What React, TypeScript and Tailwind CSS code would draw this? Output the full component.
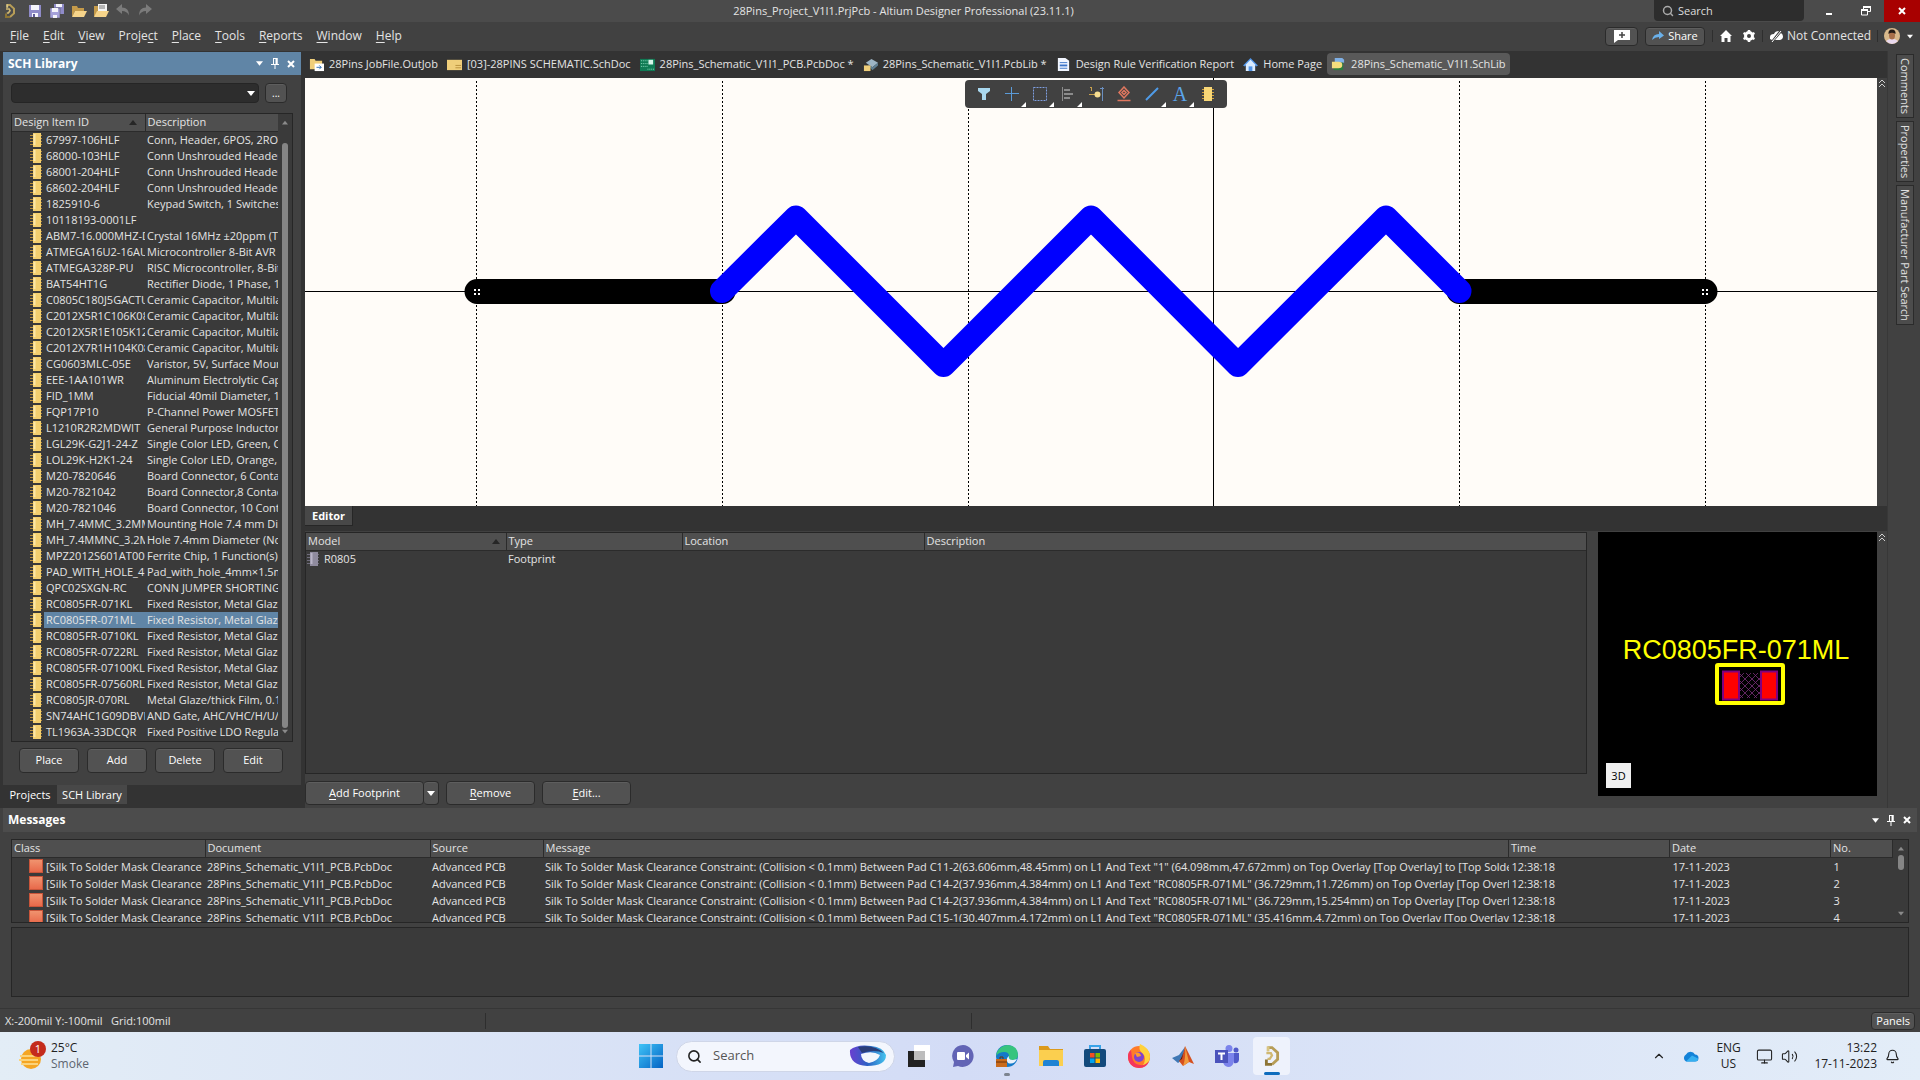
import type { ReactNode } from "react";
import { Bell, ChevronUp, Monitor, Search, Volume2 } from "lucide-react";

const parts: [string, string][] = [
  ["67997-106HLF", "Conn, Header, 6POS, 2ROW"],
  ["68000-103HLF", "Conn Unshrouded Header"],
  ["68001-204HLF", "Conn Unshrouded Header"],
  ["68602-204HLF", "Conn Unshrouded Header"],
  ["1825910-6", "Keypad Switch, 1 Switches"],
  ["10118193-0001LF", ""],
  ["ABM7-16.000MHZ-D2Y", "Crystal 16MHz ±20ppm (Tol)"],
  ["ATMEGA16U2-16AUR", "Microcontroller 8-Bit AVR"],
  ["ATMEGA328P-PU", "RISC Microcontroller, 8-Bit"],
  ["BAT54HT1G", "Rectifier Diode, 1 Phase, 1"],
  ["C0805C180J5GACTU", "Ceramic Capacitor, Multilayer"],
  ["C2012X5R1C106K085", "Ceramic Capacitor, Multilayer"],
  ["C2012X5R1E105K125", "Ceramic Capacitor, Multilayer"],
  ["C2012X7R1H104K085", "Ceramic Capacitor, Multilayer"],
  ["CG0603MLC-05E", "Varistor, 5V, Surface Mount"],
  ["EEE-1AA101WR", "Aluminum Electrolytic Cap"],
  ["FID_1MM", "Fiducial 40mil Diameter, 1"],
  ["FQP17P10", "P-Channel Power MOSFET"],
  ["L1210R2R2MDWIT", "General Purpose Inductor"],
  ["LGL29K-G2J1-24-Z", "Single Color LED, Green, C"],
  ["LOL29K-H2K1-24", "Single Color LED, Orange,"],
  ["M20-7820646", "Board Connector, 6 Contact"],
  ["M20-7821042", "Board Connector,8 Contact"],
  ["M20-7821046", "Board Connector, 10 Contact"],
  ["MH_7.4MMC_3.2MM", "Mounting Hole 7.4 mm Dia"],
  ["MH_7.4MMNC_3.2MM", "Hole 7.4mm Diameter (Non"],
  ["MPZ2012S601AT000", "Ferrite Chip, 1 Function(s)"],
  ["PAD_WITH_HOLE_4MM", "Pad_with_hole_4mm×1.5mm"],
  ["QPC02SXGN-RC", "CONN JUMPER SHORTING"],
  ["RC0805FR-071KL", "Fixed Resistor, Metal Glaze"],
  ["RC0805FR-071ML", "Fixed Resistor, Metal Glaze"],
  ["RC0805FR-0710KL", "Fixed Resistor, Metal Glaze"],
  ["RC0805FR-0722RL", "Fixed Resistor, Metal Glaze"],
  ["RC0805FR-07100KL", "Fixed Resistor, Metal Glaze"],
  ["RC0805FR-07560RL", "Fixed Resistor, Metal Glaze"],
  ["RC0805JR-070RL", "Metal Glaze/thick Film, 0.1"],
  ["SN74AHC1G09DBVR", "AND Gate, AHC/VHC/H/U/"],
  ["TL1963A-33DCQR", "Fixed Positive LDO Regulator"],
];

const messages = [
  'Silk To Solder Mask Clearance Constraint: (Collision < 0.1mm) Between Pad C11-2(63.606mm,48.45mm) on L1 And Text "1" (64.098mm,47.672mm) on Top Overlay [Top Overlay] to [Top Solder]',
  'Silk To Solder Mask Clearance Constraint: (Collision < 0.1mm) Between Pad C14-2(37.936mm,4.384mm) on L1 And Text "RC0805FR-071ML" (36.729mm,11.726mm) on Top Overlay [Top Overlay]',
  'Silk To Solder Mask Clearance Constraint: (Collision < 0.1mm) Between Pad C14-2(37.936mm,4.384mm) on L1 And Text "RC0805FR-071ML" (36.729mm,15.254mm) on Top Overlay [Top Overlay]',
  'Silk To Solder Mask Clearance Constraint: (Collision < 0.1mm) Between Pad C15-1(30.407mm,4.172mm) on L1 And Text "RC0805FR-071ML" (35.416mm,4.72mm) on Top Overlay [Top Overlay] to',
];

// [before, mnemonic, after]
const menus: [string, string, string][] = [
  ["", "F", "ile"],
  ["", "E", "dit"],
  ["", "V", "iew"],
  ["Proje", "c", "t"],
  ["", "P", "lace"],
  ["", "T", "ools"],
  ["", "R", "eports"],
  ["", "W", "indow"],
  ["", "H", "elp"],
];

const cell = "overflow-hidden whitespace-nowrap p-0 text-left font-normal";
const btn =
  "rounded-sm border border-[#2b2b2b] bg-[#525252] text-white shadow-[inset_0_1px_0_#5e5e5e]";

function Chip({ grey = false, className = "" }: { grey?: boolean; className?: string }) {
  const body = grey ? "#8f8b9e" : "#f3cf6e";
  const leg = grey ? "#6f6c7c" : "#b98f3a";
  return (
    <svg viewBox="0 0 14 16" className={"h-4 w-[14px] shrink-0 " + className}>
      <path d="M1 3.500h12M1 6.500h12M1 9.500h12M1 12.500h12" stroke={leg} />
      <rect x="4" y="1" width="8" height="14" fill={body} />
      <path d="M5.500 2v11" stroke={grey ? "#b9b5c8" : "#fbe7a8"} strokeWidth="2" />
    </svg>
  );
}

function Caret({ up = false, className = "" }: { up?: boolean; className?: string }) {
  return (
    <svg viewBox="0 0 8 5" className={"h-[5px] w-2 shrink-0 " + className} fill="currentColor">
      <path d={up ? "M0 5h8L4 0z" : "M0 0h8L4 5z"} />
    </svg>
  );
}

function DoubleChevron() {
  return (
    <svg viewBox="0 0 10 10" className="h-[10px] w-[10px]" fill="none" stroke="#d0d0d0">
      <path d="M2 5l3-3 3 3M2 9l3-3 3 3" />
    </svg>
  );
}

function Pin() {
  return (
    <svg viewBox="0 0 10 11" className="h-[11px] w-[10px]" fill="none" stroke="#fff">
      <path d="M3.500 0v6M7 0v6M3 .5h4M1 6.500h8M5 7v4" />
      <path d="M6.500 0v6" strokeWidth="2" />
    </svg>
  );
}

function Cross() {
  return (
    <svg viewBox="0 0 8 8" className="h-2 w-2" stroke="#fff" strokeWidth="2">
      <path d="M1 1l6 6M7 1L1 7" />
    </svg>
  );
}

function PanelTools() {
  return (
    <div className="flex items-center gap-[7px] text-white">
      <button aria-label="Panel menu"><Caret className="block w-[7px]" /></button>
      <button aria-label="Pin panel"><Pin /></button>
      <button aria-label="Close panel"><Cross /></button>
    </div>
  );
}

function AltiumLogo({ className = "" }: { className?: string }) {
  return (
    <svg viewBox="0 0 16 20" className={className} fill="none" strokeWidth="2.500">
      <path d="M4 2.500h4l5 4.500v6l-5 4.500" stroke="#b79d57" />
      <path d="M3 7.500h4l1 2-2 3H4" stroke="#d0b872" strokeWidth="2" />
      <path d="M3 13v4.500h5" stroke="#8d7535" />
      <path d="M4.500 1.500V6" stroke="#d8c583" />
    </svg>
  );
}

function TitleBar() {
  return (
    <header className="flex h-[22px] items-stretch bg-[#4b4b4b]">
      <div className="flex items-center gap-[6px] pl-[2px]">
        <AltiumLogo className="mr-[3px] h-4 w-4" />
        <button aria-label="Save">
          <svg viewBox="0 0 16 16" className="h-4 w-4">
            <path d="M2 2h12v12H2z" fill="#8f8bc8" />
            <path d="M4 2h8v5H4zM5 10h6v4H5z" fill="#f4f4fb" />
            <path d="M6 11h2v3H6z" fill="#5d5996" />
          </svg>
        </button>
        <button aria-label="Save all">
          <svg viewBox="0 0 16 16" className="h-4 w-4">
            <path d="M5 1h10v10H5z" fill="#8f8bc8" />
            <path d="M7 1h6v3H7z" fill="#f4f4fb" />
            <path d="M1 5h10v10H1z" fill="#a5a1da" stroke="#4b4b4b" strokeWidth=".5" />
            <path d="M3 5h6v4H3zM4 12h4v3H4z" fill="#f4f4fb" />
          </svg>
        </button>
        <button aria-label="Open">
          <svg viewBox="0 0 16 16" className="h-4 w-4">
            <path d="M1 3h5l1 2h6v3H4l-3 6z" fill="#c49a4a" />
            <path d="M4 8h12l-3 6H1z" fill="#f6d48a" />
          </svg>
        </button>
        <button aria-label="Open project">
          <svg viewBox="0 0 16 16" className="h-4 w-4">
            <path d="M1 3h5v5l-5 6z" fill="#c49a4a" />
            <path d="M5 1h9v8H5z" fill="#f4f4f4" />
            <path d="M6 3h6M6 5h6" stroke="#777" />
            <path d="M4 8h12l-3 6H1z" fill="#f6d48a" />
          </svg>
        </button>
        <button aria-label="Undo">
          <svg viewBox="0 0 16 16" className="h-4 w-4" fill="#7b7b7b">
            <path d="M1 6l6-5v3.500q7 0 7 8-2-4.500-7-4.500V11z" />
          </svg>
        </button>
        <button aria-label="Redo">
          <svg viewBox="0 0 16 16" className="h-4 w-4" fill="#7b7b7b">
            <path d="M15 6L9 1v3.500q-7 0-7 8Q4 8 9 8v3z" />
          </svg>
        </button>
      </div>
      <h1 className="flex-1 self-center text-center text-[11px]">
        28Pins_Project_V1I1.PrjPcb - Altium Designer Professional (23.11.1)
      </h1>
      <label className="mb-px flex w-[150px] items-center gap-1 rounded-b-sm bg-[#2d2d2d] px-2">
        <Search className="h-3 w-3 shrink-0 text-[#aaa]" strokeWidth={3} />
        <input
          aria-label="Search commands"
          placeholder="Search"
          className="w-full bg-transparent text-[11px] outline-none placeholder:text-[#ddd]"
        />
      </label>
      <div className="flex">
        <button aria-label="Minimize" className="ml-[7px] flex w-9 items-end justify-center pb-[7px]">
          <span className="h-[2px] w-[6px] bg-white" />
        </button>
        <button aria-label="Restore" className="flex w-[37px] items-center justify-center">
          <svg viewBox="0 0 10 10" className="h-[10px] w-[10px]" fill="none" stroke="#fff">
            <path d="M2.500 3V1h7v4.500H7" />
            <path d="M.5 4h6v5h-6z" />
            <path d="M0 4h7M2 1h8" strokeWidth="2" />
          </svg>
        </button>
        <button aria-label="Close" className="flex w-9 items-center justify-center bg-[#a80000]">
          <Cross />
        </button>
      </div>
    </header>
  );
}

function MenuBar() {
  return (
    <div className="flex h-[29px] items-center bg-[#414141] pb-px text-xs">
      <nav className="flex gap-[14px] pl-[10px]">
        {menus.map(([a, b, c]) => (
          <button key={a + b + c}>
            {a}
            <span className="underline underline-offset-2">{b}</span>
            {c}
          </button>
        ))}
      </nav>
      <div className="ml-auto flex items-center">
        <button aria-label="Add comment" className={btn + " mr-[7px] flex h-[19px] w-[33px] items-center justify-center"}>
          <svg viewBox="0 0 16 13" className="h-[13px] w-4">
            <path d="M0 0h16v10H4l-4 3z" fill="#fff" />
            <path d="M8 2v6M5 5h6" stroke="#444" strokeWidth="1.500" />
          </svg>
        </button>
        <button className={btn + " flex h-[19px] w-[60px] items-center justify-center gap-1 text-[11px]"}>
          <svg viewBox="0 0 12 10" className="h-[10px] w-3">
            <path d="M0 9q1-6 7-6V0l5 4.500L7 8V6Q3 6 0 9z" fill="#6ab0ea" />
          </svg>
          Share
        </button>
        <span className="mx-[7px] h-3 w-px bg-[#2e2e2e]" />
        <button aria-label="Home">
          <svg viewBox="0 0 12 12" className="h-3 w-3" fill="#fff">
            <path d="M6 0l6 6h-1.500v6H7.500V8h-3v4h-3V6H0z" />
          </svg>
        </button>
        <button aria-label="Preferences" className="ml-[10px]">
          <svg viewBox="0 0 14 14" className="h-[14px] w-[14px]" fill="none" stroke="#fff">
            <circle cx="7" cy="7" r="3.500" strokeWidth="3" />
            <path d="M7 1v2M7 11v2M1.500 4l2 1M10.500 9l2 1M1.500 10l2-1M10.500 5l2-1" strokeWidth="2.500" />
          </svg>
        </button>
        <span className="mx-[6px] h-3 w-px bg-[#2e2e2e]" />
        <button className="flex items-center gap-1">
          <svg viewBox="0 0 14 12" className="h-3 w-[14px]">
            <path d="M1 9V7q0-3 4-3 1-3 5-3l-7 9zM6 10l6-7q2 1 2 3.500T11 10z" fill="#fff" />
            <path d="M12 1L3 12" stroke="#fff" />
          </svg>
          Not Connected
        </button>
        <span className="mx-[6px] h-3 w-px bg-[#2e2e2e]" />
        <button aria-label="Account" className="mr-[7px] flex items-center gap-[7px]">
          <svg viewBox="0 0 16 16" className="h-4 w-4">
            <circle cx="8" cy="8" r="8" fill="#d9b98c" />
            <path d="M2 13q6-5 12 0-6 6-12 0z" fill="#e9d9ef" />
            <ellipse cx="8" cy="7.500" rx="3" ry="4" fill="#a86f4a" />
            <path d="M4.500 6Q4 1.500 8 1.500T11.500 6Q8 3.500 4.500 6z" fill="#231a16" />
          </svg>
          <Caret className="w-[6px] text-white" />
        </button>
      </div>
    </div>
  );
}

function LibraryPanel() {
  return (
    <aside className="flex w-[305px] shrink-0 flex-col bg-[#333] pt-px pr-1 pl-[3px]">
      <div className="flex h-[23px] items-center justify-between bg-[#6085a6] pr-[6px] pl-[5px] text-white">
        <h2 className="text-xs font-bold">SCH Library</h2>
        <PanelTools />
      </div>
      <div className="flex flex-1 flex-col bg-[#414141] px-2 pt-2">
        <div className="flex gap-[6px]">
          <div className="relative flex-1">
            <select
              aria-label="Library filter"
              className="block h-5 w-full appearance-none rounded-sm border border-[#252525] bg-[#2d2d2d]"
            />
            <Caret className="pointer-events-none absolute top-2 right-1 text-white" />
          </div>
          <button aria-label="More" className={btn + " mr-[6px] h-5 w-[22px] text-[10px] text-[#bbb]"}>
            ...
          </button>
        </div>
        <div className="mt-[10px] flex w-[282px] border border-[#262626] bg-[#3a3a3a] pb-px">
          <table className="w-[266px] table-fixed border-collapse">
            <thead>
              <tr className="h-[17px] border-b border-[#2b2b2b] bg-[#4f4f4f]">
                <th className={cell + " w-[133px] border-r border-[#2b2b2b] pl-[2px]"}>
                  <div className="flex items-center justify-between pr-2">
                    Design Item ID
                    <Caret up className="text-[#262626]" />
                  </div>
                </th>
                <th className={cell + " pl-[2px]"}>Description</th>
              </tr>
            </thead>
            <tbody>
              {parts.map(([id, desc]) => (
                <tr key={id} className="h-4 leading-4">
                  <td className={cell}>
                    <div className="flex pl-[17px]">
                      <Chip />
                      <span className={"ml-px flex-1 overflow-hidden pl-[2px] " + (id === "RC0805FR-071ML" ? "bg-[#6085a6]" : "")}>
                        {id}
                      </span>
                    </div>
                  </td>
                  <td className={cell + " pl-[2px] " + (id === "RC0805FR-071ML" ? "bg-[#6085a6]" : "")}>{desc}</td>
                </tr>
              ))}
            </tbody>
          </table>
          <div className="flex flex-1 flex-col items-center justify-between py-[6px] text-[#8a8a8a]">
            <Caret up className="h-1 w-[6px]" />
            <div className="mt-[18px] mb-px w-[6px] flex-1 rounded-sm bg-[#858585]" />
            <Caret className="h-1 w-[6px]" />
          </div>
        </div>
        <div className="flex gap-2 px-2 pt-[6px] pb-2">
          {["Place", "Add", "Delete", "Edit"].map((t) => (
            <button key={t} className={btn + " h-[25px] w-[60px]"}>{t}</button>
          ))}
        </div>
      </div>
      <div className="flex h-[23px] items-start text-white">
        <button className="h-[19px] w-[54px] px-1">Projects</button>
        <button className="h-[19px] w-[70px] bg-[#484848]">SCH Library</button>
      </div>
    </aside>
  );
}

const docIcons: Record<string, ReactNode> = {
  job: (
    <>
      <path d="M1 2h5l1 2h7v9H1z" fill="#efce7a" />
      <path d="M6 7h10v8H6z" fill="#fff" />
      <path d="M8 11h5M11 9l2 2-2 2" stroke="#2b6cb0" fill="none" />
    </>
  ),
  sch: (
    <>
      <path d="M0 3h16v11H0z" fill="#efce7a" />
      <path d="M9 9h6M9 11.500h6" stroke="#b78f3c" />
    </>
  ),
  pcb: (
    <>
      <path d="M0 2h16v13H0z" fill="#0f7a54" />
      <path d="M9 3h5v5H9z" fill="#d7f5ea" />
      <path d="M1 4h7M1 7h7M1 10h7M8 13h7" stroke="#8fe0c2" strokeDasharray="1 1" />
    </>
  ),
  pcblib: (
    <>
      <path d="M3 6l6-4 7 4-6 5z" fill="#9db4c4" />
      <path d="M5 8l5 3 6-5v3l-6 5z" fill="#5f7e92" />
      <path d="M1 9h7v6H1z" fill="#efce7a" />
    </>
  ),
  report: (
    <>
      <path d="M2 1h8l4 3v11H2z" fill="#f2f6ff" />
      <path d="M4 6h8M4 12h8" stroke="#3b73c8" />
      <path d="M4 9h8" stroke="#3b73c8" strokeWidth="2" />
    </>
  ),
  home: (
    <>
      <path d="M0 9l8-8 8 8-2 1-6-6-6 6z" fill="#4f93e6" />
      <path d="M3 8l5-5 5 5v7H3z" fill="#d9ebff" />
      <path d="M6 10h4v5H6z" fill="#4f93e6" />
    </>
  ),
  schlib: (
    <>
      <path d="M4 1h8l2 2v3H4z" fill="#7fb0e6" />
      <path d="M3 6h10v8H3z" fill="#2f7d3e" />
      <path d="M1 5h7q4 0 4 3.500T8 12H1z" fill="#f5dd7d" />
    </>
  ),
};

const docs = [
  { icon: "job", name: "28Pins JobFile.OutJob" },
  { icon: "sch", name: "[03]-28PINS SCHEMATIC.SchDoc" },
  { icon: "pcb", name: "28Pins_Schematic_V1I1_PCB.PcbDoc *" },
  { icon: "pcblib", name: "28Pins_Schematic_V1I1.PcbLib *" },
  { icon: "report", name: "Design Rule Verification Report" },
  { icon: "home", name: "Home Page" },
  { icon: "schlib", name: "28Pins_Schematic_V1I1.SchLib", active: true },
];

function DocumentTabs() {
  return (
    <div className="flex h-[27px] items-center gap-px bg-[#333] pb-px whitespace-nowrap">
      {docs.map((d) => (
        <button
          key={d.name}
          className={"flex h-[22px] items-center gap-[5px] px-1 " + (d.active ? "rounded-sm bg-[#595959]" : "")}
        >
          <svg viewBox="0 0 16 16" className="h-[15px] w-[15px]">{docIcons[d.icon]}</svg>
          {d.name}
        </button>
      ))}
    </div>
  );
}

const tools: { name: string; more?: boolean; icon: ReactNode }[] = [
  { name: "Filter", icon: <path d="M2 2h12v3l-4 3v6H6V8L2 5z" fill="#a9d8ef" /> },
  { name: "Move", more: true, icon: <path d="M7.500 1v14M1 7.500h14" stroke="#5b9bd8" /> },
  { name: "Select", more: true, icon: <path d="M1.500 1.500h13v13h-13z" fill="none" stroke="#7f9fe0" strokeDasharray="2 1" /> },
  {
    name: "Align",
    more: true,
    icon: (
      <>
        <path d="M2.500 1v14" stroke="#8b8b8b" />
        <path d="M4 4h6M4 8h9M4 12h6" stroke="#8b8b8b" strokeWidth="2" />
      </>
    ),
  },
  {
    name: "Place pin",
    icon: (
      <>
        <path d="M14.500 1v14M12 2.500h4" stroke="#6a8fc0" />
        <path d="M1 8.500h8M3.500 1v4M2 1.500h2" stroke="#c9a14e" />
        <circle cx="9.500" cy="8.500" r="3" fill="#f6dd91" />
      </>
    ),
  },
  {
    name: "Place IEEE symbol",
    icon: (
      <g fill="none" stroke="#e0775f" strokeWidth="1.500">
        <path d="M8 1l5 5.500-5 5.500-5-5.500z" />
        <path d="M8 4.500l2 2-2 2-2-2zM1.500 14.500h13" />
      </g>
    ),
  },
  { name: "Place line", more: true, icon: <path d="M2 14L14 2" stroke="#4f9be8" strokeWidth="2" /> },
  {
    name: "Place text",
    more: true,
    icon: <text x="8" y="15" textAnchor="middle" fontSize="20" fill="#5ba4ea" fontFamily="Liberation Serif, serif">A</text>,
  },
  {
    name: "Place part",
    icon: (
      <>
        <path d="M2 3.500h12M2 6.500h12M2 9.500h12M2 12.500h12" stroke="#d0a13c" />
        <path d="M4 1h8v14H4z" fill="#f8d777" />
      </>
    ),
  },
];

function Canvas() {
  return (
    <div className="relative flex min-h-[300px] flex-1">
      <div className="relative flex-1 overflow-hidden bg-[#fffcf8]">
        <svg
          viewBox="0 0 1572 427"
          preserveAspectRatio="xMidYMin meet"
          className="absolute inset-0 h-full w-full overflow-visible"
          fill="none"
        >
          <path
            d="M171.500 3v900M417.500 3v900M663.500 3v900M1154.500 3v900M1400.500 3v900"
            stroke="#000"
            strokeDasharray="2 2"
          />
          <path d="M908.500 0v900M-900 213.500h3400" stroke="#000" />
          <path d="M172 213.500h246M1154 213.500h246" stroke="#000" strokeWidth="25" strokeLinecap="round" />
          <path
            d="M417 213L491 139.500 638.500 287 786 139.500 933 287 1081 139.500 1154.500 213"
            stroke="#00f"
            strokeWidth="24"
            strokeLinecap="round"
            strokeLinejoin="round"
          />
          <path
            d="M169 212h2M173 212h2M169 216h2M173 216h2M1397 212h2M1401 212h2M1397 216h2M1401 216h2"
            stroke="#fff"
            strokeWidth="2"
          />
        </svg>
      </div>
      <div className="w-[10px] bg-[#414141]">
        <DoubleChevron />
      </div>
      <div className="absolute top-[2px] left-1/2 flex -translate-x-1/2 rounded bg-[#414141] px-[5px]">
        {tools.map((t) => (
          <button key={t.name} aria-label={t.name} className="relative flex h-7 w-7 items-center justify-center">
            <svg viewBox="0 0 16 16" className="h-4 w-4">{t.icon}</svg>
            {t.more && (
              <svg viewBox="0 0 5 5" className="absolute right-0 bottom-px h-[5px] w-[5px]">
                <path d="M5 0v5H0z" fill="#fff" />
              </svg>
            )}
          </button>
        ))}
      </div>
    </div>
  );
}

function EditorPane() {
  return (
    <section>
      <div className="h-[25px] bg-[#333]">
        <h2 className="inline-block h-5 border-r border-b border-[#262626] bg-[#484848] px-[7px] leading-5 font-bold text-white">
          Editor
        </h2>
      </div>
      <div className="flex bg-[#414141] pt-px">
        <div className="flex flex-1 flex-col">
          <div className="min-h-[242px] border border-[#262626] bg-[#3a3a3a]">
            <table className="w-full table-fixed border-collapse">
              <thead>
                <tr className="h-[17px] border-b border-[#2b2b2b] bg-[#4f4f4f]">
                  <th className={cell + " w-[200px] border-r border-[#2b2b2b] pl-[2px]"}>
                    <div className="flex items-center justify-between pr-[6px]">
                      Model
                      <Caret up className="text-[#262626]" />
                    </div>
                  </th>
                  <th className={cell + " w-[176px] border-r border-[#2b2b2b] pl-[2px]"}>Type</th>
                  <th className={cell + " w-[242px] border-r border-[#2b2b2b] pl-[2px]"}>Location</th>
                  <th className={cell + " pl-[2px]"}>Description</th>
                </tr>
              </thead>
              <tbody>
                <tr className="h-4">
                  <td className={cell}>
                    <div className="flex items-center gap-1">
                      <Chip grey />
                      R0805
                    </div>
                  </td>
                  <td className={cell + " pl-[2px]"}>Footprint</td>
                  <td />
                  <td />
                </tr>
              </tbody>
            </table>
          </div>
          <div className="flex gap-[7px] pt-[7px] pb-[3px]">
            <div className="flex">
              <button className={btn + " h-6 w-[119px]"}>
                <span className="underline underline-offset-2">A</span>dd Footprint
              </button>
              <button aria-label="More footprint options" className={btn + " flex h-6 w-[15px] items-center justify-center border-l-0"}>
                <Caret />
              </button>
            </div>
            <button className={btn + " h-6 w-[89px]"}>
              <span className="underline underline-offset-2">R</span>emove
            </button>
            <button className={btn + " h-6 w-[89px]"}>
              <span className="underline underline-offset-2">E</span>dit...
            </button>
          </div>
        </div>
        <div className="relative ml-[11px] h-[264px] w-[279px] bg-black">
          <svg viewBox="0 0 279 264" className="h-full w-full">
            <defs>
              <pattern id="hatch" width="7" height="7" patternUnits="userSpaceOnUse">
                <path d="M0 0l7 7M7 0L0 7" stroke="#7a2f7a" strokeWidth=".8" />
              </pattern>
            </defs>
            <text x="138" y="127" textAnchor="middle" fontSize="27" fill="#ff0" fontFamily="Liberation Sans, sans-serif">
              RC0805FR-071ML
            </text>
            <rect x="119" y="133" width="66" height="38" rx="1" fill="#000" stroke="#ff0" strokeWidth="4" />
            <path d="M142 141h20v25h-20z" fill="url(#hatch)" />
            <path d="M125 139.500h16v28h-16zM163 139.500h16v28h-16z" fill="#f00" stroke="#800080" strokeWidth="2" />
          </svg>
          <button className="absolute bottom-2 left-2 h-[25px] w-[25px] bg-[#f0f0f0] text-black">3D</button>
        </div>
        <div className="w-[10px]">
          <DoubleChevron />
        </div>
      </div>
    </section>
  );
}

function SideTabs() {
  return (
    <div className="flex w-[33px] shrink-0 flex-col gap-[3px] border-l border-[#383838] bg-[#414141] pt-[3px] pl-2">
      {["Comments", "Properties", "Manufacturer Part Search"].map((t) => (
        <button
          key={t}
          className="flex w-[18px] items-center border border-[#2b2b2b] bg-[#4c4c4c] py-[3px] leading-4 text-[#e0e0e0]"
        >
          <span className="[writing-mode:vertical-rl]">{t}</span>
        </button>
      ))}
    </div>
  );
}

function Messages() {
  const th = cell + " border-r border-[#2b2b2b] pl-[2px]";
  return (
    <section className="bg-[#414141] px-[3px]">
      <div className="flex h-6 items-center justify-between bg-[#4c4c4c] pr-[6px] pl-[5px]">
        <h2 className="text-xs font-bold text-white">Messages</h2>
        <PanelTools />
      </div>
      <div className="mx-2 mt-[7px] flex h-[84px] overflow-hidden border border-[#262626] bg-[#3a3a3a]">
        <div className="min-w-0 flex-1">
          <table className="w-full table-fixed border-collapse">
            <thead>
              <tr className="h-[17px] border-b border-[#2b2b2b] bg-[#4f4f4f]">
                <th className={th + " w-[193px]"}>Class</th>
                <th className={th + " w-[225px]"}>Document</th>
                <th className={th + " w-[113px]"}>Source</th>
                <th className={th}>Message</th>
                <th className={th + " w-[161px]"}>Time</th>
                <th className={th + " w-[161px]"}>Date</th>
                <th className={th + " w-[62px]"}>No.</th>
              </tr>
            </thead>
            <tbody>
              {messages.map((m, i) => (
                <tr key={m} className="h-[17px] leading-[17px]">
                  <td className={cell}>
                    <div className="flex items-center gap-[3px] pl-[17px]">
                      <span className="h-[14px] w-[14px] shrink-0 border border-[#c9553a] bg-linear-to-b from-[#f0936f] to-[#e8694a]" />
                      [Silk To Solder Mask Clearance
                    </div>
                  </td>
                  <td className={cell + " pl-[2px]"}>28Pins_Schematic_V1I1_PCB.PcbDoc</td>
                  <td className={cell + " pl-[2px]"}>Advanced PCB</td>
                  <td className={cell + " pl-[2px]"}>{m}</td>
                  <td className={cell + " pl-[3px]"}>12:38:18</td>
                  <td className={cell + " pl-[3px]"}>17-11-2023</td>
                  <td className={cell + " pl-[3px]"}>{i + 1}</td>
                </tr>
              ))}
            </tbody>
          </table>
        </div>
        <div className="flex w-[15px] flex-col items-center py-[6px] text-[#8a8a8a]">
          <Caret up className="h-1 w-[6px]" />
          <div className="mt-1 h-[15px] w-[6px] rounded-sm bg-[#858585]" />
          <Caret className="mt-auto h-1 w-[6px]" />
        </div>
      </div>
      <div className="mx-2 mt-1 mb-[11px] h-[70px] border border-[#262626] bg-[#3a3a3a]" />
    </section>
  );
}

function StatusBar() {
  return (
    <footer className="flex h-6 items-center border-t border-[#363636] bg-[#414141] pl-[5px]">
      <span className="w-[106px]">X:-200mil Y:-100mil</span>
      <span className="w-[374px]">Grid:100mil</span>
      <span className="h-4 w-px bg-[#2e2e2e]" />
      <span className="ml-[485px] h-4 w-px bg-[#2e2e2e]" />
      <button className={btn + " mr-[5px] ml-auto h-[18px] px-1 leading-4"}>Panels</button>
    </footer>
  );
}

const apps: { name: string; icon: ReactNode }[] = [
  {
    name: "Task View",
    icon: (
      <>
        <path d="M7 1h16v15H7z" fill="#fff" />
        <path d="M1 7h17v16H1z" fill="#222" />
        <path d="M7 7h11v9H7z" fill="#bdbdbd" />
      </>
    ),
  },
  {
    name: "Chat",
    icon: (
      <>
        <path d="M12 1a11 11 0 1 1-5 21l-5 1 1-5A11 11 0 0 1 12 1z" fill="#6264b5" />
        <rect x="6" y="8" width="8" height="8" rx="1" fill="#fff" />
        <path d="M15 11l3-2.500v7L15 13z" fill="#fff" />
      </>
    ),
  },
  {
    name: "Edge",
    icon: (
      <>
        <circle cx="12" cy="12" r="11" fill="#1479c8" />
        <path d="M2 8Q6 1 13 1q10 1 10 10 0 5-6 5-4 0-3-4 0-4-5-4-5 0-8 4z" fill="#37c47e" />
        <path d="M14 12q-1 4 4 4l4-1q-3 6-9 4-3-4 1-7z" fill="#e8f0fa" />
        <path d="M1 15h11v8H1z" fill="#c96a1c" />
        <path d="M1 18h11M5 15v-2h3v2" stroke="#6b3208" fill="none" />
      </>
    ),
  },
  {
    name: "File Explorer",
    icon: (
      <>
        <path d="M0 2h9l2 3h13v6H0z" fill="#dc9a1c" />
        <path d="M0 6h24v16H0z" fill="#fbcf4f" />
        <path d="M4 22v-4q0-2 2-2h12q2 0 2 2v4z" fill="#1f83d4" />
      </>
    ),
  },
  {
    name: "Store",
    icon: (
      <>
        <path d="M7 6V2h10v4" stroke="#3aa3e8" strokeWidth="2" fill="none" />
        <rect x="1" y="5" width="22" height="18" rx="2" fill="#134a7c" />
        <path d="M7 9h4.500v4.500H7z" fill="#f25022" />
        <path d="M12.500 9H17v4.500h-4.500z" fill="#7fba00" />
        <path d="M7 14.500h4.500V19H7z" fill="#00a4ef" />
        <path d="M12.500 14.500H17V19h-4.500z" fill="#ffb900" />
      </>
    ),
  },
  {
    name: "Firefox",
    icon: (
      <>
        <circle cx="12" cy="13" r="11" fill="#ff7b29" />
        <path d="M13 0q10 4 10 13-1 8-8 10 6-9 0-14-4-4-2-9z" fill="#ffd23c" />
        <path d="M1 12q0 11 11 12 8 0 10-7-4 5-9 4-7-1-8-8L4 6Q1 8 1 12z" fill="#f5365c" />
        <circle cx="12" cy="13" r="5" fill="#8044cf" />
        <path d="M8 9q5-2 6 3l-4 1z" fill="#ff9a2b" />
      </>
    ),
  },
  {
    name: "MATLAB",
    icon: (
      <>
        <path d="M1 14l7-3 6-8-3 13-4 3z" fill="#3f78b5" />
        <path d="M14 2l9 18-5-2-6 4-4-5q4-4 6-15z" fill="#d5501f" />
        <path d="M14 2l-3 13-3 2q4-4 6-15z" fill="#5a1a10" />
        <path d="M14 2l4 16-6 4q3-8 2-20z" fill="#f19a3c" />
      </>
    ),
  },
  {
    name: "Teams",
    icon: (
      <>
        <circle cx="14" cy="4.500" r="3.500" fill="#7b83eb" />
        <circle cx="21" cy="6" r="2.500" fill="#5059c9" />
        <path d="M17 9h7v7q-1 4-5 3z" fill="#5059c9" />
        <path d="M8 9h11v8q-1 6-6 6-5-1-5-6z" fill="#7b83eb" />
        <path d="M0 6h13v13H0z" fill="#4b53bc" />
        <path d="M3 9.500h7M6.500 9.500V16" stroke="#fff" strokeWidth="2" />
      </>
    ),
  },
];

function Taskbar() {
  return (
    <footer className="flex h-12 items-center bg-linear-to-r from-[#e3edf6] via-[#d3dcf6] to-[#e3edf8] text-xs text-[#222]">
      <button className="flex flex-1 items-center gap-[5px] pl-[19px] text-left leading-4">
        <svg viewBox="0 0 27 30" className="h-[30px] w-[27px]">
          <circle cx="12" cy="18" r="10" fill="#f5a623" />
          <path d="M1 15h18M0 19h19M2 23h17" stroke="#fbd37a" strokeWidth="2" />
          <circle cx="19" cy="8" r="8" fill="#c42b1c" />
          <text x="19" y="12" textAnchor="middle" fontSize="11" fill="#fff">1</text>
        </svg>
        <span>
          25°C
          <span className="block text-[#5d6570]">Smoke</span>
        </span>
      </button>
      <div className="flex items-center pl-[14px]">
        <button aria-label="Start">
          <svg viewBox="0 0 24 24" className="h-6 w-6">
            <defs>
              <linearGradient id="win" x2="1" y2="1">
                <stop stopColor="#3fc3f7" />
                <stop offset="1" stopColor="#0463c4" />
              </linearGradient>
            </defs>
            <path d="M0 0h11.500v11.500H0zM12.500 0H24v11.500H12.500zM0 12.500h11.500V24H0zM12.500 12.500H24V24H12.500z" fill="url(#win)" />
          </svg>
        </button>
        <label className="mr-[2px] ml-[13px] flex h-[31px] w-[219px] items-center gap-[11px] rounded-full border border-[#cfd6e8] bg-[#f3f6fd] pr-[7px] pl-[10px]">
          <Search className="h-[15px] w-[15px] shrink-0 text-[#222]" strokeWidth={2.5} />
          <input
            aria-label="Search Windows"
            placeholder="Search"
            className="min-w-0 flex-1 bg-transparent text-[13px] outline-none placeholder:text-[#555]"
          />
          <svg viewBox="0 0 38 22" className="h-[22px] w-[38px]">
            <defs>
              <linearGradient id="bing" x2="1" y2="0">
                <stop stopColor="#6a3fd0" />
                <stop offset=".5" stopColor="#2b62c4" />
                <stop offset="1" stopColor="#45c4ee" />
              </linearGradient>
            </defs>
            <path
              d="M1 5Q8-1 22 1q12 1 15 9 0 11-19 11Q0 20 1 5zM12 9q0 7 8 9 9-2 11-8-8-5-19-1z"
              fill="url(#bing)"
              fillRule="evenodd"
            />
            <path d="M9 2q16-3 26 6-10-4-22 0z" fill="#2a3d78" />
          </svg>
        </label>
        {apps.map((a) => (
          <button key={a.name} aria-label={a.name} className="relative flex h-10 w-11 items-center justify-center">
            <svg viewBox="0 0 24 24" className="h-6 w-6">{a.icon}</svg>
            {a.name === "Edge" && <span className="absolute bottom-0 h-[3px] w-[6px] rounded-full bg-[#7d8490]" />}
          </button>
        ))}
        <button aria-label="Altium Designer" className="relative mx-1 flex h-[38px] w-[37px] items-center justify-center rounded bg-[#eef2fc]">
          <AltiumLogo className="h-6 w-[18px]" />
          <span className="absolute bottom-0 h-[3px] w-4 rounded-full bg-[#0f6cbd]" />
        </button>
      </div>
      <div className="flex flex-1 items-center justify-end pr-[20px] leading-4">
        <button aria-label="Hidden icons"><ChevronUp className="h-[14px] w-[14px]" /></button>
        <button aria-label="OneDrive" className="ml-[16px]">
          <svg viewBox="0 0 17 12" className="h-3 w-[17px]">
            <path d="M4 11.500a4 4 0 0 1 0-7 5 5 0 0 1 9 0 3.500 3.500 0 0 1 0 7z" fill="#1382d8" />
            <path d="M4 11.500l6-6 6 3q0 3-3 3z" fill="#36b0f0" />
          </svg>
        </button>
        <button className="ml-[17px] w-6 text-center">ENG<br />US</button>
        <button aria-label="Network and volume" className="ml-[16px] flex items-center gap-2">
          <Monitor className="h-[17px] w-[17px]" strokeWidth={1.5} />
          <Volume2 className="h-[17px] w-[17px]" strokeWidth={1.5} />
        </button>
        <button className="ml-[16px] text-right">13:22<br />17-11-2023</button>
        <button aria-label="Notifications" className="ml-[8px]">
          <Bell className="h-[15px] w-[15px]" strokeWidth={1.8} />
        </button>
      </div>
    </footer>
  );
}

export default function App() {
  return (
    <main className="flex min-h-screen flex-col bg-[#414141] font-['Open_Sans','Noto_Sans',sans-serif] text-[11px] leading-4 text-[#e4e4e4]">
      <TitleBar />
      <MenuBar />
      <div className="flex flex-1">
        <LibraryPanel />
        <div className="flex min-w-0 flex-1 flex-col">
          <DocumentTabs />
          <Canvas />
          <EditorPane />
        </div>
        <SideTabs />
      </div>
      <Messages />
      <StatusBar />
      <Taskbar />
    </main>
  );
}
